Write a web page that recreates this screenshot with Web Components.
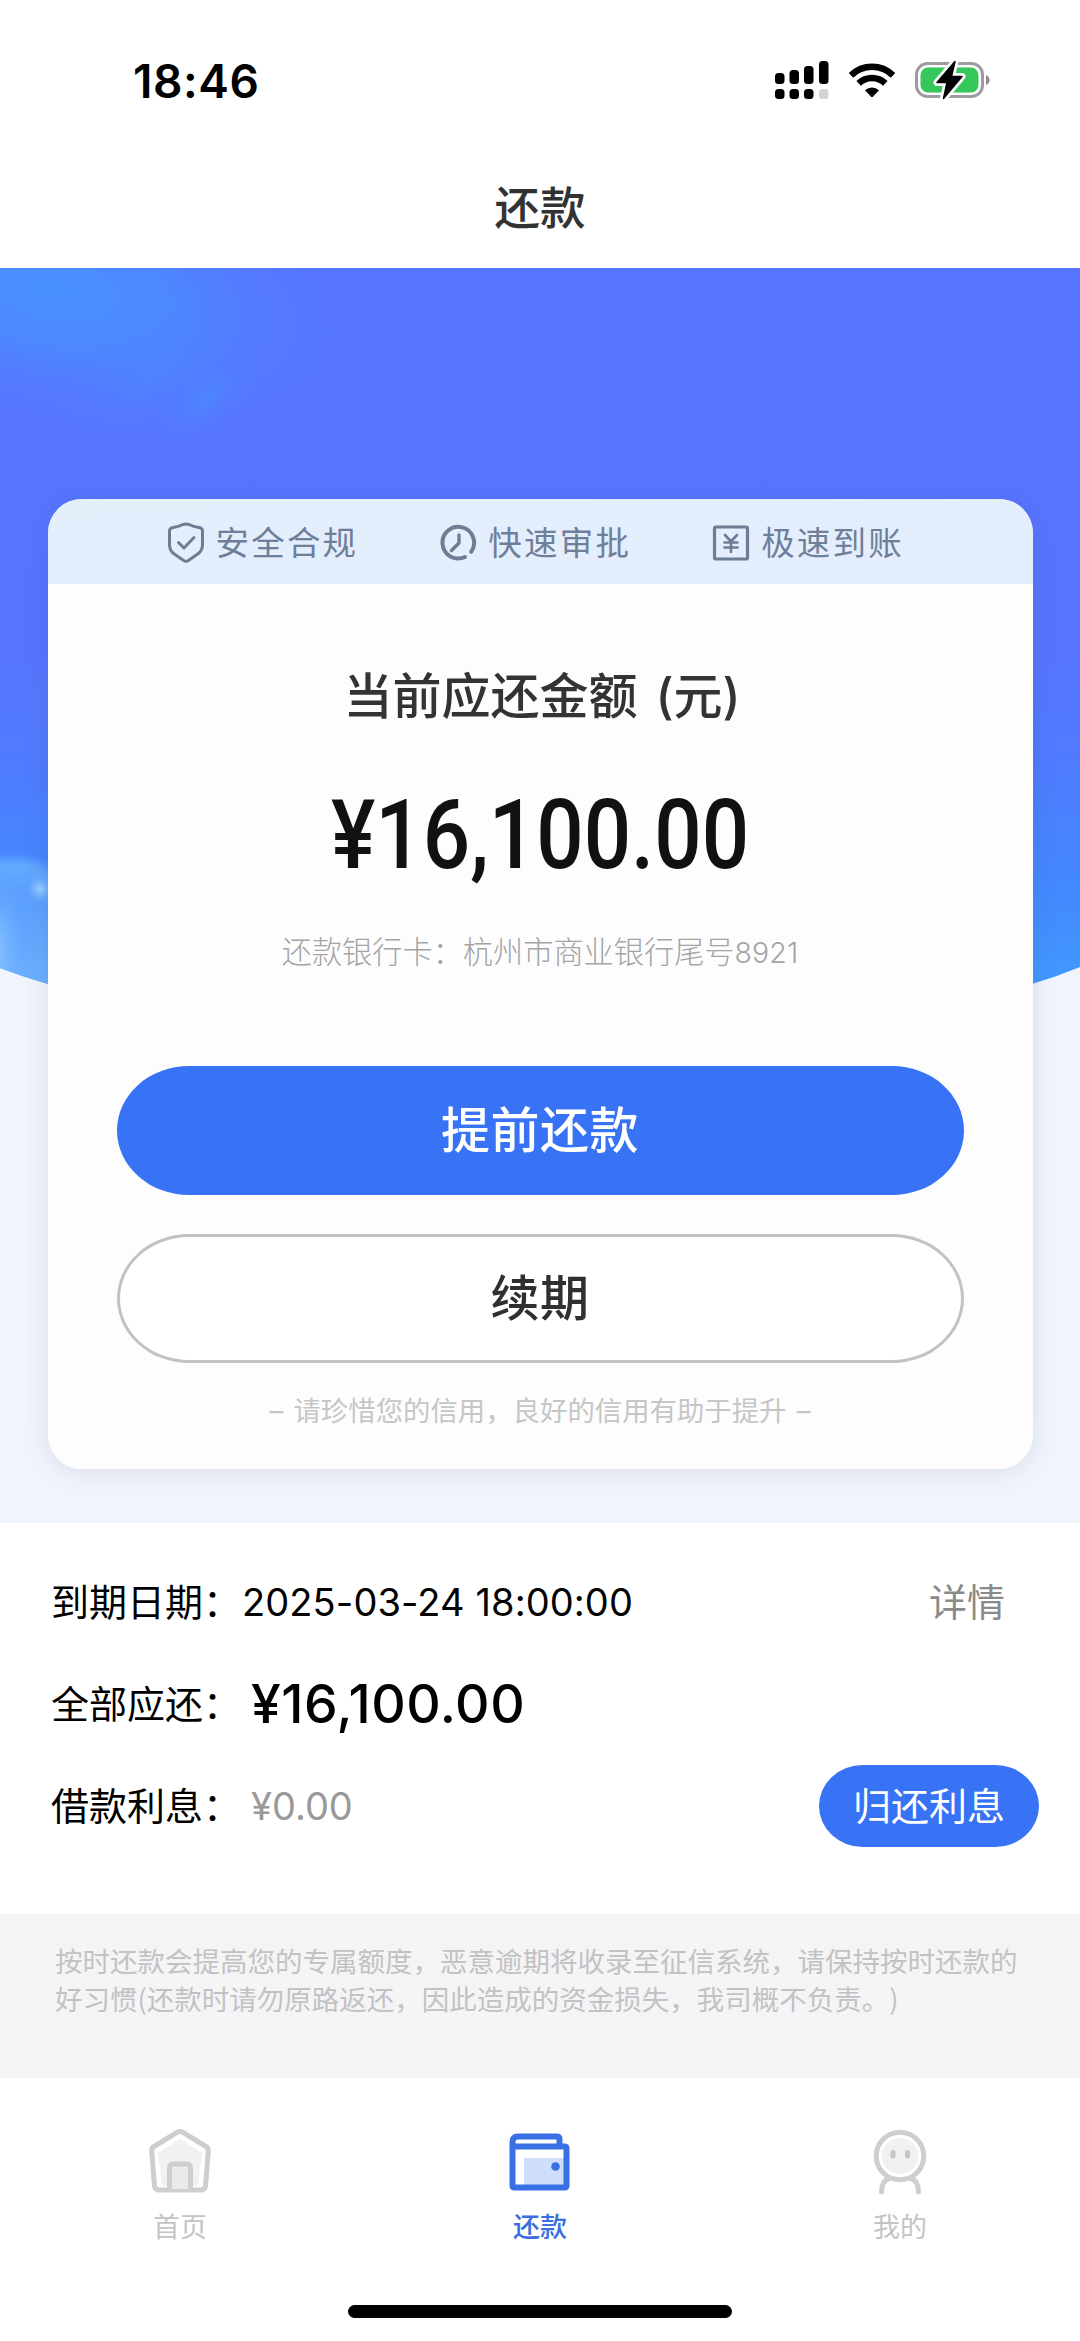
<!DOCTYPE html>
<html lang="zh-CN">
<head>
<meta charset="utf-8">
<title>还款</title>
<style>
  html, body { margin: 0; padding: 0; background: #fff; }
  body { width: 1080px; height: 2341px; overflow: hidden; font-family: "Inter", "Noto Sans CJK SC", sans-serif; color: #000; }
</style>
</head>
<body>
<repay-app></repay-app>
<script>
const define = (name, html) => {
  const tpl = document.createElement('template');
  tpl.innerHTML = html;
  customElements.define(name, class extends HTMLElement {
    constructor() {
      super();
      this.attachShadow({ mode: 'open' }).appendChild(tpl.content.cloneNode(true));
    }
  });
};

define('status-bar', `
<style>
  :host { display: flex; align-items: center; justify-content: space-between; height: 160px; padding: 1px 90px 0 133px; box-sizing: border-box; }
  time { font-size: 46px; font-weight: 600; line-height: 56px; letter-spacing: 0.6px; }
  .icons { display: flex; align-items: center; }
  svg { display: block; }
</style>
<time>18:46</time>
<div class="icons">
  <svg width="217" height="44" viewBox="0 0 217 44">
    <g fill="#000">
      <rect x="2" y="14" width="9.5" height="11" rx="3.5"/>
      <rect x="16.5" y="11" width="9.5" height="14" rx="3.5"/>
      <rect x="31" y="7" width="9.5" height="18" rx="3.5"/>
      <rect x="46" y="2" width="9.5" height="23" rx="3.5"/>
      <rect x="2" y="30" width="9.5" height="10" rx="3.5"/>
      <rect x="16.5" y="30" width="9.5" height="10" rx="3.5"/>
      <rect x="31" y="30" width="9.5" height="10" rx="3.5"/>
    </g>
    <rect x="46" y="30" width="9.5" height="10" rx="3.5" fill="#d3d3d3"/>
    <g fill="none" stroke="#000" stroke-width="6.4">
      <path d="M78 16.4 A30 30 0 0 1 120 16.4"/>
      <path d="M85.7 24.4 A19 19 0 0 1 112.3 24.4"/>
    </g>
    <path d="M92 31.2 A10.5 10.5 0 0 1 106 31.2 L100.2 37.5 Q99 38.6 97.8 37.5 Z" fill="#000"/>
    <rect x="143.5" y="4.5" width="66" height="33" rx="11" fill="#fff" stroke="#9f9a9f" stroke-width="3"/>
    <rect x="147.5" y="8.5" width="58" height="25" rx="7.5" fill="#35c759"/>
    <path d="M213 16 q3.5 1.5 3.5 5 t-3.5 5 z" fill="#8f8a8f"/>
    <path d="M182 2.5 L164 23.5 L174 23.5 L170.5 39.5 L189 17.5 L178.5 17.5 Z" fill="#000" stroke="#fff" stroke-width="7" stroke-linejoin="round"/>
    <path d="M182 2.5 L164 23.5 L174 23.5 L170.5 39.5 L189 17.5 L178.5 17.5 Z" fill="#000" stroke="#000" stroke-width="1.5" stroke-linejoin="round"/>
  </svg>
</div>`);

define('nav-title', `
<style>
  :host { display: flex; justify-content: center; height: 108px; }
  h1 { margin: 22px 0 0; font-size: 45.5px; font-weight: 500; line-height: 54px; color: #333; }
</style>
<h1><slot></slot></h1>`);

define('feature-item', `
<style>
  :host { display: flex; align-items: center; gap: 11px; font-size: 33.5px; line-height: 40px; letter-spacing: 2.2px; color: #6f7f99; font-weight: 400; }
  ::slotted(svg) { display: block; flex: none; }
</style>
<slot name="icon"></slot><span><slot></slot></span>`);

define('feature-strip', `
<style>
  :host { display: flex; height: 85px; padding: 2px 0 0 119px; gap: 81px; align-items: center; background: linear-gradient(175deg, #e3effb, #e4edfe); box-sizing: border-box; }
  svg { fill: none; stroke: #6c7d94; }
</style>
<feature-item>
  <svg slot="icon" width="38" height="42" viewBox="0 0 38 42" stroke-width="3" stroke-linejoin="round" stroke-linecap="round"><path d="M2.5 9 Q2.5 6.5 5 5.8 Q12 4.5 16 2.5 Q19 1.3 22 2.5 Q26 4.5 33 5.8 Q35.5 6.5 35.5 9 V23 Q35.5 29 30 32.5 L21 38.8 Q19 40 17 38.8 L8 32.5 Q2.5 29 2.5 23 Z"/><path d="M11.5 20.5 L17 26 L27 15.5"/></svg>安全合规</feature-item>
<feature-item>
  <svg slot="icon" width="38" height="42" viewBox="0 0 38 42" stroke-width="4" stroke-linecap="round"><path d="M26 35 A15.8 15.8 0 1 1 32.2 29.8"/><path d="M20 13 V21 L12.5 28.5" stroke-width="3.4" stroke-linejoin="round"/></svg>快速审批</feature-item>
<feature-item>
  <svg slot="icon" width="38" height="42" viewBox="0 0 38 42" stroke-width="3.2" stroke-linecap="round" stroke-linejoin="round"><rect x="2.5" y="5" width="33" height="32" rx="1.5"/><path d="M13 13 L19 19.5 L25 13 M19 19.5 V30 M12.5 20.5 H25.5 M12.5 25.5 H25.5" stroke-width="2.6"/></svg>极速到账</feature-item>`);

define('pill-button', `
<style>
  :host { display: flex; align-items: center; justify-content: center; box-sizing: border-box; height: 129px; border-radius: 72px / 64.5px; background: #3773f4; color: #fff; font-size: 49px; font-weight: 500; line-height: 60px; letter-spacing: .5px; }
  :host([variant="outline"]) { background: #fff; color: #303030; border: 3px solid #c2c2c2; }
  :host([size="small"]) { width: 220px; height: 82px; border-radius: 44px / 41px; font-size: 38px; font-weight: 400; letter-spacing: 0; }
</style>
<span><slot></slot></span>`);

define('repay-card', `
<style>
  :host { display: flex; flex-direction: column; height: 970px; width: 985px; border-radius: 34px; background: #fdfdfe; overflow: hidden; }
  .body { display: flex; flex-direction: column; align-items: center; flex: 1; }
  .caption { margin-top: 83px; height: 60px; line-height: 60px; font-size: 49px; font-weight: 500; color: #333; white-space: pre; word-spacing: 5px; padding-left: 4px; }
  .amount { margin-top: 53px; height: 110px; line-height: 110px; font-family: Roboto, sans-serif; font-size: 97px; font-weight: 500; color: #111; transform: scaleX(.86); white-space: nowrap; }
  .bank { margin-top: 42px; height: 40px; line-height: 40px; font-size: 30.2px; color: #a4a4a4; white-space: nowrap; font-weight: 300; }
  .bank b { font: inherit; font-size: 28.5px; letter-spacing: .1px; }
  .actions { display: flex; flex-direction: column; gap: 39px; width: 847px; margin-top: 94px; }
  .note { margin-top: 29px; height: 38px; line-height: 38px; font-size: 27.4px; color: #c6c6c6; white-space: pre; word-spacing: 2.5px; }
</style>
<feature-strip></feature-strip>
<div class="body">
  <div class="caption">当前应还金额 (元)</div>
  <div class="amount">¥16,100.00</div>
  <div class="bank">还款银行卡：杭州市商业银行尾号<b>8921</b></div>
  <div class="actions">
    <pill-button>提前还款</pill-button>
    <pill-button variant="outline">续期</pill-button>
  </div>
  <div class="note">– 请珍惜您的信用，良好的信用有助于提升 –</div>
</div>`);

define('hero-panel', `
<style>
  :host { display: grid; height: 1255px; background: #f0f4fd; }
  .sky, .front { grid-area: 1 / 1; }
  .sky { display: block; width: 1080px; height: 1255px; }
  .front { display: flex; flex-direction: column; align-items: center; padding-top: 231px; }
  .shadow { border-radius: 34px; box-shadow: 0 2px 26px rgba(70, 75, 90, .13); }
</style>
<svg class="sky" viewBox="0 0 1080 1255">
  <defs>
    <linearGradient id="sky" x1="0" y1="0" x2="0" y2="1">
      <stop offset="0" stop-color="#5676ff"/><stop offset=".5" stop-color="#5774ff"/><stop offset=".67" stop-color="#4f7bff"/><stop offset=".83" stop-color="#4388ff"/><stop offset="1" stop-color="#419cff"/>
    </linearGradient>
    <radialGradient id="glow"><stop offset="0" stop-color="#4991ff"/><stop offset=".4" stop-color="#4b8bff" stop-opacity=".85"/><stop offset="1" stop-color="#5676ff" stop-opacity="0"/></radialGradient>
    <radialGradient id="spot"><stop offset="0" stop-color="#4790ff" stop-opacity=".6"/><stop offset="1" stop-color="#5278ff" stop-opacity="0"/></radialGradient>
    <linearGradient id="cloud" x1="0" y1="0" x2="0" y2="1"><stop offset="0" stop-color="#67adff"/><stop offset=".2" stop-color="#5a9eff"/><stop offset="1" stop-color="#74b9ff"/></linearGradient>
    <radialGradient id="puff"><stop offset="0" stop-color="#9fd4ff"/><stop offset="1" stop-color="#6aafff" stop-opacity="0"/></radialGradient>
    <clipPath id="dome"><path d="M0 0 H1080 V699 Q1056 709 1032 716 Q540 850 48 716 Q24 709 0 700 Z"/></clipPath>
    <filter id="soft"><feGaussianBlur stdDeviation="4"/></filter>
  </defs>
  <g clip-path="url(#dome)">
    <rect width="1080" height="740" fill="url(#sky)"/>
    <ellipse cx="50" cy="20" rx="310" ry="140" fill="url(#glow)" transform="rotate(12 50 20)"/>
    <ellipse cx="150" cy="110" rx="120" ry="60" fill="url(#spot)" opacity=".55" transform="rotate(-25 150 110)"/>
    <ellipse cx="205" cy="132" rx="70" ry="34" fill="url(#spot)" transform="rotate(-38 205 132)"/>
    <path d="M-20 598 Q0 588 28 592 Q50 596 60 615 V760 H-20 Z" fill="url(#cloud)" filter="url(#soft)"/>
    <ellipse cx="0" cy="680" rx="24" ry="80" fill="url(#puff)" opacity=".5"/>
    <circle cx="40" cy="621" r="15" fill="url(#puff)"/>
  </g>
</svg>
<div class="front"><div class="shadow"><repay-card></repay-card></div></div>`);

define('info-row', `
<style>
  :host { display: flex; align-items: center; height: 102px; font-size: 38px; line-height: 50px; white-space: nowrap; }
  .label { width: 191px; }
  .value { flex: 1; display: flex; align-items: center; }
</style>
<div class="label"><slot name="label"></slot></div><div class="value"><slot></slot></div><slot name="action"></slot>`);

define('loan-info', `
<style>
  :host { display: block; height: 391px; padding: 28px 41px 0 51px; box-sizing: border-box; }
  .date { font-size: 38px; letter-spacing: .1px; }
  .total { font-size: 53.5px; font-weight: 500; letter-spacing: .5px; padding-left: 9px; }
  .interest { color: #999; font-size: 38px; letter-spacing: 0; padding-left: 9px; }
  .more { color: #8a8a8a; margin-right: 34px; }
</style>
<info-row><span slot="label">到期日期：</span><span class="date">2025-03-24 18:00:00</span><span slot="action" class="more">详情</span></info-row>
<info-row><span slot="label">全部应还：</span><span class="total">¥16,100.00</span></info-row>
<info-row><span slot="label">借款利息：</span><span class="interest">¥0.00</span><pill-button slot="action" size="small">归还利息</pill-button></info-row>`);

define('notice-box', `
<style>
  :host { display: block; height: 164px; box-sizing: border-box; padding: 27px 50px 0 55px; background: linear-gradient(#f4f4f4, #f5f5f8); color: #c2c2c4; font-size: 27.5px; line-height: 38.3px; white-space: nowrap; font-family: "Noto Sans CJK SC", sans-serif; text-spacing-trim: space-all; }
</style>
<slot></slot>`);

define('tab-item', `
<style>
  :host { flex: 1; display: flex; flex-direction: column; align-items: center; color: #c4c4c4; font-size: 27px; line-height: 36px; }
  :host([active]) { color: #3a6fdd; font-weight: 500; }
  ::slotted(svg) { display: block; margin-bottom: 14px; }
</style>
<slot name="icon"></slot><span><slot></slot></span>`);

define('tab-bar', `
<style>
  :host { display: flex; height: 227px; padding-top: 46px; box-sizing: border-box; }
</style>
<tab-item>
  <svg slot="icon" width="72" height="72" viewBox="0 0 72 72" fill="none" stroke="#cecece" stroke-width="5" stroke-linejoin="round">
    <path d="M36 15 L58 29 L54 62 H18 L14 29 Z" fill="#f1f1f1" stroke="none"/>
    <path d="M33.5 8.2 Q36 6.8 38.5 8.2 L62 22.5 Q64.5 24 64.3 27 L61.5 62 Q61 66 57 66 H15 Q11 66 10.5 62 L7.7 27 Q7.5 24 10 22.5 Z"/>
    <path d="M25.5 65 V44 Q25.5 40 29.5 40 H42.5 Q46.5 40 46.5 44 V65" fill="#eaeaea"/>
  </svg>首页</tab-item>
<tab-item active>
  <svg slot="icon" width="72" height="72" viewBox="0 0 72 72" fill="none" stroke="#3970e4" stroke-width="6" stroke-linejoin="round">
    <rect x="20" y="34" width="40" height="28" fill="#cfdefb" stroke="none"/>
    <rect x="8.5" y="22.5" width="54" height="41" rx="1.5"/>
    <path d="M8.5 24 V18 Q8.5 12.5 14 12.5 H53 Q55.5 12.5 55.5 15 V22.5"/>
    <circle cx="51.5" cy="42.5" r="4.3" fill="#3970e4" stroke="none"/>
  </svg>还款</tab-item>
<tab-item>
  <svg slot="icon" width="72" height="72" viewBox="0 0 72 72" fill="none" stroke="#cecece" stroke-width="5" stroke-linecap="round">
    <circle cx="36" cy="32" r="18" fill="#f0f0f0" stroke="none"/>
    <circle cx="36" cy="32" r="23.8"/>
    <path d="M17.5 68 C17.5 61 20 56 25 54.500 M54.500 68 C54.500 61 52 56 47 54.500"/>
    <path d="M29 28.500 V32 M43.500 28.500 V32" stroke="#c6c6c6"/>
  </svg>我的</tab-item>`);

define('home-indicator', `
<style>
  :host { display: block; width: 384px; height: 13px; border-radius: 7px; background: #000; margin: 0 auto; }
</style>`);

define('repay-app', `
<style>
  :host { display: flex; flex-direction: column; width: 1080px; height: 2341px; background: #fff; }
</style>
<status-bar></status-bar>
<nav-title>还款</nav-title>
<hero-panel></hero-panel>
<loan-info></loan-info>
<notice-box>按时还款会提高您的专属额度，恶意逾期将收录至征信系统，请保持按时还款的<br>好习惯(还款时请勿原路返还，因此造成的资金损失，我司概不负责。)</notice-box>
<tab-bar></tab-bar>
<home-indicator></home-indicator>`);
</script>
</body>
</html>
